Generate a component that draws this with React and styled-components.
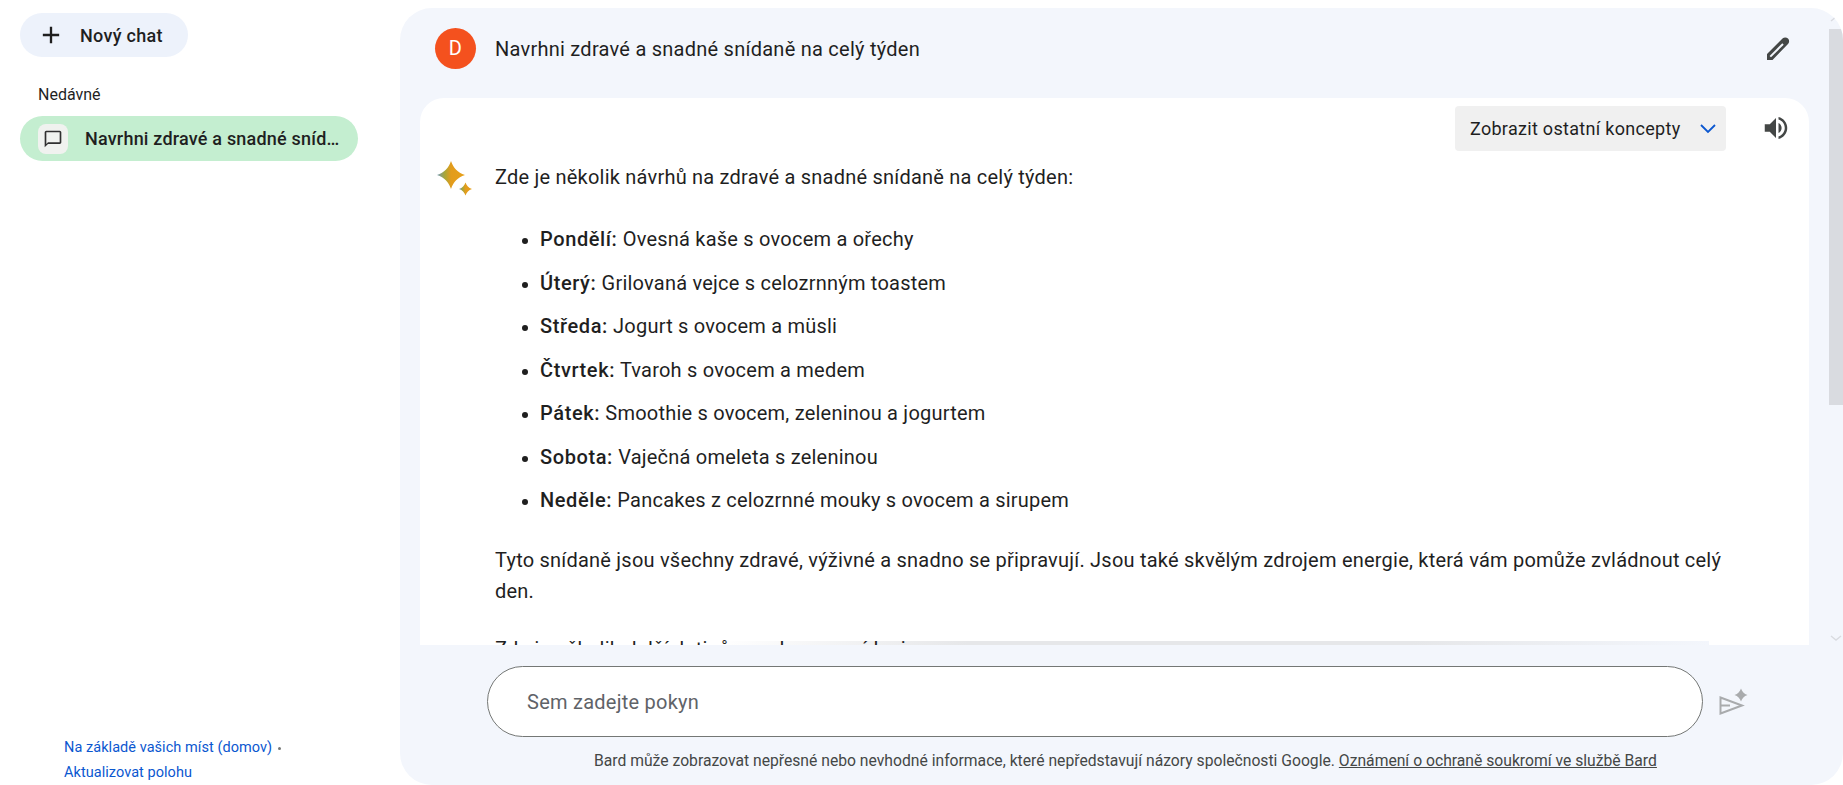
import React from 'react';
import styled, { createGlobalStyle } from 'styled-components';

const GlobalStyle = createGlobalStyle`
  *, *::before, *::after { box-sizing: border-box; }
  html, body {
    margin: 0;
    height: 100%;
    overflow: hidden;
    background: #fff;
    font-family: Roboto, "Noto Sans", "Liberation Sans", sans-serif;
    color: #1f1f1f;
  }
`;

const Page = styled.div`
  display: flex;
  width: 1843px;
  height: 785px;
`;

const Sidebar = styled.aside`
  display: flex;
  flex-direction: column;
  flex: 0 0 400px;
  min-width: 0;
  padding: 13px 42px 0 20px;
`;

const NewChat = styled.button`
  display: flex;
  align-items: center;
  gap: 15px;
  width: 168px;
  height: 44px;
  padding: 0 0 0 17px;
  border: 0;
  border-radius: 22px;
  background: #edf2fb;
  color: #1f1f1f;
  font: 500 18px Roboto, sans-serif;
  letter-spacing: .3px;
`;

const SectionLabel = styled.div`
  margin: 29px 0 0 18px;
  height: 18px;
  line-height: 18px;
  font-size: 16px;
  color: #1f1f1f;
`;

const ChatItem = styled.div`
  display: flex;
  align-items: center;
  gap: 17px;
  height: 45px;
  margin-top: 12px;
  padding: 0 18px;
  border-radius: 23px;
  background: #c4eed0;
  font-size: 18px;
  font-weight: 500;
  letter-spacing: .2px;
`;

const ChatIconBox = styled.span`
  display: flex;
  align-items: center;
  justify-content: center;
  flex: none;
  width: 30px;
  height: 30px;
  border-radius: 8px;
  background: #f0f2ef;
`;

const Ellipsis = styled.span`
  min-width: 0;
  white-space: nowrap;
  overflow: hidden;
  text-overflow: ellipsis;
`;

const Location = styled.div`
  margin: auto 0 0 44px;
  font-size: 14.5px;
  line-height: 25px;
  color: #0b57d0;
  white-space: nowrap;
  letter-spacing: .05px;
`;

const Dot = styled.span`
  display: inline-block;
  width: 3px;
  height: 3px;
  margin-left: 6px;
  border-radius: 50%;
  vertical-align: middle;
  background: #747775;
`;

const Main = styled.main`
  display: flex;
  flex: 1;
  min-width: 0;
  margin-top: 8px;
  border-radius: 32px;
  background: #f3f6fc;
  overflow: hidden;
`;

const Column = styled.div`
  display: flex;
  flex-direction: column;
  flex: 1;
  min-width: 0;
`;

const Header = styled.header`
  display: flex;
  align-items: center;
  flex: 0 0 90px;
  padding: 0 36px 10px 35px;
  font-size: 20px;
  letter-spacing: .25px;
`;

const Avatar = styled.div`
  display: flex;
  align-items: center;
  justify-content: center;
  flex: none;
  width: 41px;
  height: 41px;
  margin-right: 19px;
  border-radius: 50%;
  background: #f4511e;
  color: #fff;
  font-size: 20px;
`;

const HeaderTitle = styled.div`
  flex: 1;
  padding-top: 2px;
`;

const Card = styled.section`
  position: relative;
  flex: 0 0 547px;
  margin: 0 20px;
  border-radius: 24px 24px 0 0;
  background: #fff;
  overflow: hidden;
`;

const CardTop = styled.div`
  display: flex;
  align-items: center;
  justify-content: flex-end;
  height: 44px;
  margin-top: 8px;
  padding-right: 18px;
`;

const Drafts = styled.div`
  display: flex;
  align-items: center;
  justify-content: space-between;
  width: 271px;
  height: 45px;
  margin-right: 35px;
  padding: 0 6px 0 15px;
  border-radius: 4px;
  background: #f0f0f0;
  font-size: 18px;
  letter-spacing: .3px;
`;

const Answer = styled.div`
  display: flex;
  margin-top: 3px;
  padding: 0 75px 0 16px;
`;

const Spark = styled.div`
  flex: none;
  width: 59px;
  padding-top: 8px;
`;

const Body = styled.div`
  position: relative;
  z-index: 1;
  flex: 1;
  font-size: 20px;
  line-height: 31px;
  letter-spacing: .22px;
`;

const Para = styled.p`
  margin: 0 0 ${p => p.$after || 27}px;
  padding-top: ${p => p.$top || 0}px;
`;

const List = styled.ul`
  margin: 0 0 29px;
  padding: 0 0 0 45px;
`;

const Item = styled.li`
  margin-bottom: 12.5px;
  &::marker { font-size: 18px; }
  strong { font-weight: 500; letter-spacing: .6px; }
`;

const FooterShade = styled.div`
  position: absolute;
  left: 300px;
  right: 100px;
  bottom: 0;
  height: 4px;
  background: linear-gradient(to right, #fff, #e6e7e9 25%, #e6e7e9 70%, #f3f6fc);
`;

const Footer = styled.footer`
  display: flex;
  flex-direction: column;
  flex: 1;
`;

const PromptRow = styled.div`
  display: flex;
  align-items: center;
  gap: 15px;
  margin: 21px 0 0 87px;
`;

const Prompt = styled.div`
  display: flex;
  align-items: center;
  width: 1216px;
  height: 71px;
  padding-left: 39px;
  border: 1px solid #747775;
  border-radius: 36px;
  background: #fff;
  font-size: 20px;
  letter-spacing: .25px;
  color: #5f6368;
`;

const Notice = styled.div`
  margin: 16px 0 0 194px;
  font-size: 15.7px;
  line-height: 16px;
  color: #444746;
  white-space: nowrap;
  a { color: inherit; text-decoration: underline; }
`;

const Rail = styled.div`
  display: flex;
  flex-direction: column;
  align-items: center;
  flex: 0 0 14px;
  height: 640px;
`;

const RailArrow = styled.div`
  flex: 0 0 21px;
  display: flex;
  align-items: center;
  justify-content: center;
`;

const RailThumb = styled.div`
  width: 100%;
  height: 376px;
  background: #d9dbe0;
`;

const RailGap = styled.div`
  flex: 1;
`;

const Icon = ({ d, size = 24, color = '#1f1f1f' }) => (
  <svg width={size} height={size} viewBox="0 0 24 24" fill={color}>
    <path d={d} />
  </svg>
);

const PLUS = 'M19 13h-6v6h-2v-6H5v-2h6V5h2v6h6v2z';
const BUBBLE = 'M20 2H4c-1.1 0-2 .9-2 2v18l4-4h14c1.1 0 2-.9 2-2V4c0-1.1-.9-2-2-2zm0 14H6l-2 2V4h16v12z';
const SPEAKER = 'M3 9v6h4l5 5V4L7 9H3zm13.5 3c0-1.77-1.02-3.29-2.5-4.03v8.05c1.48-.73 2.5-2.25 2.5-4.02zM14 3.23v2.06c2.89.86 5 3.54 5 6.71s-2.11 5.85-5 6.71v2.06c4.01-.91 7-4.49 7-8.77s-2.99-7.86-7-8.77z';

const star = (cx, cy, r) =>
  `M${cx} ${cy - r}C${cx + r * 0.2} ${cy - r * 0.45} ${cx + r * 0.45} ${cy - r * 0.2} ${cx + r} ${cy}C${cx + r * 0.45} ${cy + r * 0.2} ${cx + r * 0.2} ${cy + r * 0.45} ${cx} ${cy + r}C${cx - r * 0.2} ${cy + r * 0.45} ${cx - r * 0.45} ${cy + r * 0.2} ${cx - r} ${cy}C${cx - r * 0.45} ${cy - r * 0.2} ${cx - r * 0.2} ${cy - r * 0.45} ${cx} ${cy - r}Z`;

const BardSpark = () => (
  <svg width="38" height="38" viewBox="0 0 38 38">
    <defs>
      <linearGradient id="spark" x1="0" y1="0" x2="1" y2="0">
        <stop offset="0" stopColor="#6f97b5" />
        <stop offset=".28" stopColor="#a8a636" />
        <stop offset=".5" stopColor="#e39c1c" />
        <stop offset="1" stopColor="#e6a01a" />
      </linearGradient>
    </defs>
    <path d={star(15, 14, 14)} fill="url(#spark)" />
    <path d={star(29.5, 28, 6.5)} fill="url(#spark)" />
  </svg>
);

const PencilIcon = () => (
  <svg width="30" height="30" viewBox="0 0 30 30">
    <path
      d="M4 27V21L19.500 5.500C21 4 23.500 4 25 5.500C26.500 7 26.500 9.500 25 11L9.500 27Z"
      fill="#444746"
    />
    <path d="M7.300 23.600L20 11" stroke="#f3f6fc" strokeWidth="2" />
  </svg>
);

const SendIcon = () => (
  <svg width="30" height="28" viewBox="0 0 30 28" fill="none">
    <path d="M2.500 9.500V25.500L24 17.500L2.500 9.500ZM2.500 17.500H12" stroke="#a9abad" strokeWidth="2" />
    <path d={star(23, 7, 6.500)} fill="#a9abad" />
  </svg>
);

const days = [
  ['Pondělí:', 'Ovesná kaše s ovocem a ořechy'],
  ['Úterý:', 'Grilovaná vejce s celozrnným toastem'],
  ['Středa:', 'Jogurt s ovocem a müsli'],
  ['Čtvrtek:', 'Tvaroh s ovocem a medem'],
  ['Pátek:', 'Smoothie s ovocem, zeleninou a jogurtem'],
  ['Sobota:', 'Vaječná omeleta s zeleninou'],
  ['Neděle:', 'Pancakes z celozrnné mouky s ovocem a sirupem'],
];

export default function App() {
  return (
    <Page>
      <GlobalStyle />
      <Sidebar>
        <NewChat>
          <Icon d={PLUS} size={28} />
          Nový chat
        </NewChat>
        <SectionLabel>Nedávné</SectionLabel>
        <ChatItem>
          <ChatIconBox>
            <Icon d={BUBBLE} size={20} color="#303030" />
          </ChatIconBox>
          <Ellipsis>Navrhni zdravé a snadné snídaně na celý týden</Ellipsis>
        </ChatItem>
        <Location>
          Na základě vašich míst (domov)<Dot />
          <br />
          Aktualizovat polohu
        </Location>
      </Sidebar>
      <Main>
        <Column>
          <Header>
            <Avatar>D</Avatar>
            <HeaderTitle>Navrhni zdravé a snadné snídaně na celý týden</HeaderTitle>
            <PencilIcon />
          </Header>
          <Card>
            <CardTop>
              <Drafts>
                Zobrazit ostatní koncepty
                <svg width="24" height="24" viewBox="0 0 24 24" fill="none">
                  <path d="M5 9l7 7 7-7" stroke="#0b57d0" strokeWidth="1.8" />
                </svg>
              </Drafts>
              <Icon d={SPEAKER} size={30} color="#444746" />
            </CardTop>
            <Answer>
              <Spark>
                <BardSpark />
              </Spark>
              <Body>
                <Para $top={9} $after={31}>Zde je několik návrhů na zdravé a snadné snídaně na celý týden:</Para>
                <List>
                  {days.map(([day, meal]) => (
                    <Item key={day}>
                      <strong>{day}</strong> {meal}
                    </Item>
                  ))}
                </List>
                <Para>
                  Tyto snídaně jsou všechny zdravé, výživné a snadno se připravují. Jsou také skvělým zdrojem energie,
                  která vám pomůže zvládnout celý den.
                </Para>
                <Para>Zde je několik dalších tipů na zdravou snídani:</Para>
              </Body>
            </Answer>
            <FooterShade />
          </Card>
          <Footer>
            <PromptRow>
              <Prompt>Sem zadejte pokyn</Prompt>
              <SendIcon />
            </PromptRow>
            <Notice>
              Bard může zobrazovat nepřesné nebo nevhodné informace, které nepředstavují názory společnosti Google.{' '}
              <a>Oznámení o ochraně soukromí ve službě Bard</a>
            </Notice>
          </Footer>
        </Column>
        <Rail>
          <RailArrow>
            <svg width="12" height="8" viewBox="0 0 12 8" fill="none">
              <path d="M1 6l5-4 5 4" stroke="#d9dbe0" strokeWidth="1.4" />
            </svg>
          </RailArrow>
          <RailThumb />
          <RailGap />
          <RailArrow>
            <svg width="12" height="8" viewBox="0 0 12 8" fill="none">
              <path d="M1 2l5 4 5-4" stroke="#d9dbe0" strokeWidth="1.4" />
            </svg>
          </RailArrow>
        </Rail>
      </Main>
    </Page>
  );
}
